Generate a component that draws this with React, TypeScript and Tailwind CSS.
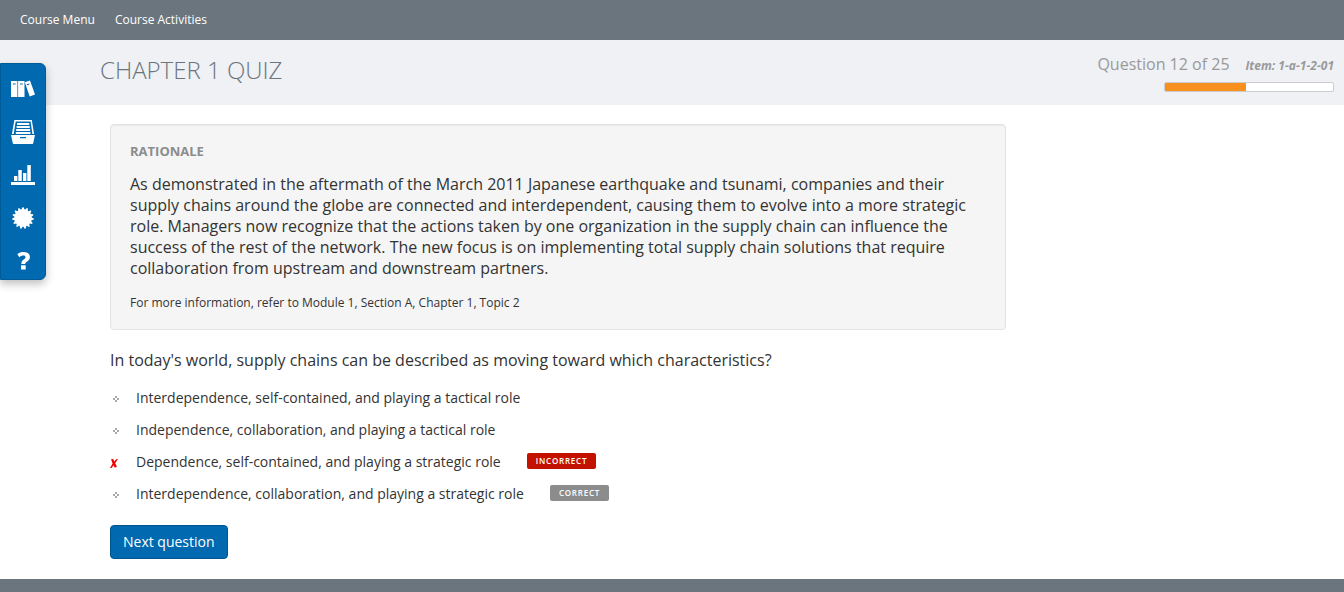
import type { ReactNode } from "react";

type Option = { text: string; mark?: "incorrect" | "correct"; chosen?: boolean };

const options: Option[] = [
  { text: "Interdependence, self-contained, and playing a tactical role" },
  { text: "Independence, collaboration, and playing a tactical role" },
  { text: "Dependence, self-contained, and playing a strategic role", mark: "incorrect", chosen: true },
  { text: "Interdependence, collaboration, and playing a strategic role", mark: "correct" },
];

// Corner points of the round seal: outer and inner radii alternate.
const sealTeeth = 15;
const sealPoints = Array.from({ length: sealTeeth * 4 }, (_, i) => {
  const radius = i % 4 < 2 ? 10.8 : 8.8;
  const angle = ((i - 0.5) / (sealTeeth * 4)) * Math.PI * 2 - Math.PI / 2;
  return `${(12 + radius * Math.cos(angle)).toFixed(2)},${(12 + radius * Math.sin(angle)).toFixed(2)}`;
}).join(" ");

function Icon({ children }: { children: ReactNode }) {
  return (
    <svg viewBox="0 0 24 24" className="size-6" fill="currentColor" aria-hidden="true">
      {children}
    </svg>
  );
}

const tools: { label: string; icon: ReactNode }[] = [
  {
    label: "Library",
    icon: (
      <Icon>
        <path fillRule="evenodd" d="M0 4h6.4v16H0zM2 6.6v1h2.6v-1z" />
        <path fillRule="evenodd" d="M7.1 4h6.4v16H7.1zM9 6.6v1h2.7v-1z" />
        <path fillRule="evenodd" d="M13.8 5.2 19 3.6l5 13.8-5.3 2.2zM15.7 7.2l.4 1 2.5-.8-.4-1z" />
      </Icon>
    ),
  },
  {
    label: "Flashcards",
    icon: (
      <Icon>
        <path d="M3.4 0h17.4l2.3 14h-1.7L19.6 1.4H4.7L2.7 14H.9z" />
        <path d="M6 3h12.3v2H6zM5.6 6h13.1v2H5.6zM5.2 9h13.9v2H5.2zM4.8 12h14.7v2H4.8z" />
        <path fillRule="evenodd" d="M0 15h24l-1.8 8.3q-.2.7-.9.7H2.700q-.7 0-.9-.7zM9 17v1.300h6V17z" />
      </Icon>
    ),
  },
  {
    label: "Reports",
    icon: (
      <Icon>
        <path d="M0 19h24v3H0zM3 13h3.4v5H3zM7.3 7h3.5v11H7.3zM12 10h3.4v8H12zM16.3 2h3.5v16h-3.5z" />
      </Icon>
    ),
  },
  {
    label: "Achievements",
    icon: (
      <Icon>
        <polygon points={sealPoints} />
      </Icon>
    ),
  },
  {
    label: "Help",
    icon: (
      <Icon>
        <path d="M6.3 5.1C8 3.6 10.1 3 12.5 3c4 0 6.4 1.900 6.400 5 0 2.300-1.100 3.600-3 4.800-1.300.8-1.600 1.100-1.600 2.200h-3.900c-.1-2.400.7-3.500 2.600-4.800 1.100-.8 1.500-1.200 1.500-2 0-1-.8-1.600-2.200-1.600-1.500 0-2.800.6-4 1.600zM10 16.200h4.700v4.300H10z" />
      </Icon>
    ),
  },
];

function Marker({ chosen }: { chosen?: boolean }) {
  return (
    <span className="flex w-[26px] shrink-0">
      {chosen ? (
        <svg viewBox="0 0 8 9" className="mt-0.5 h-[9px] w-2" role="img" aria-label="Your answer">
          <path
            d="M1 .3 3.300 0l1 2.500L6.200.2 8 0 5.200 4.300 6.900 7.800l-2.200.9-1.100-2.500L1.600 9 0 8.900l2.600-4.400z"
            fill="#f00000"
          />
        </svg>
      ) : (
        <svg viewBox="0 0 6 6" className="mt-0.5 ml-[3px] size-[6px]" aria-hidden="true">
          <path d="M2 0h2v2H2zM0 2h2v2H0zM4 2h2v2H4zM2 4h2v2H2z" fill="#aaaaaa" />
        </svg>
      )}
    </span>
  );
}

export default function App() {
  return (
    <div className="relative flex min-h-screen flex-col bg-white font-['Open_Sans',sans-serif] text-[#333333]">
      <nav className="flex h-10 items-center gap-5 bg-[#6b757d] px-5 text-xs text-white">
        <a href="#menu">Course Menu</a>
        <a href="#activities">Course Activities</a>
      </nav>

      <header className="flex h-[65px] justify-between bg-[#eff1f5] pr-[10px] pl-[100px]">
        <h1 className="pt-3 text-2xl leading-9 font-light text-[#6b757d]">CHAPTER 1 QUIZ</h1>
        <div className="flex flex-col items-end pt-3 text-[#999999]">
          <p className="flex items-baseline gap-4 text-base">
            <span>Question 12 of 25</span>
            <em className="text-xs font-bold">Item: 1-a-1-2-01</em>
          </p>
          <div className="mt-[6px] h-[10px] w-[170px] overflow-hidden rounded-xs border border-[#cccccc] bg-white">
            <div className="h-full bg-[#f7901e]" style={{ width: `${(12 / 25) * 100}%` }} />
          </div>
        </div>
      </header>

      <aside className="absolute top-[63px] left-0 flex flex-col gap-[19px] rounded-r-md border border-[#005a96] bg-[#0069b0] px-[10px] pt-[13px] pb-[6px] text-white shadow-[0_4px_8px_rgba(0,0,0,0.25)]">
        {tools.map((tool) => (
          <button key={tool.label} type="button" aria-label={tool.label}>
            {tool.icon}
          </button>
        ))}
      </aside>

      <main className="flex-1 pt-[19px] pb-5 pl-[110px]">
        <section className="mr-[338px] rounded border border-[#e3e3e3] bg-[#f5f5f5] px-[19px] pt-4 pb-4 shadow-[inset_0_1px_1px_rgba(0,0,0,0.05)]">
          <h2 className="text-[13px] leading-5 font-bold text-[#8c8c8c]">RATIONALE</h2>
          <p className="mt-[13px] text-base leading-[21px]">
            As demonstrated in the aftermath of the March 2011 Japanese earthquake and tsunami, companies and their
            supply chains around the globe are connected and interdependent, causing them to evolve into a more strategic
            role. Managers now recognize that the actions taken by one organization in the supply chain can influence the
            success of the rest of the network. The new focus is on implementing total supply chain solutions that require
            collaboration from upstream and downstream partners.
          </p>
          <p className="mt-[14px] text-xs leading-5">For more information, refer to Module 1, Section A, Chapter 1, Topic 2</p>
        </section>

        <p className="mt-5 text-base leading-[21px]">
          In today's world, supply chains can be described as moving toward which characteristics?
        </p>

        <ul className="mt-[11px] text-sm">
          {options.map((option) => (
            <li key={option.text} className="flex h-8 items-center">
              <Marker chosen={option.chosen} />
              <span>{option.text}</span>
              {option.mark === "incorrect" && (
                <strong className="mb-0.5 ml-[26px] rounded-xs bg-[#c41200] px-[9px] text-[8px] leading-4 font-semibold tracking-widest text-white">
                  INCORRECT
                </strong>
              )}
              {option.mark === "correct" && (
                <strong className="mb-0.5 ml-[26px] rounded-xs bg-[#8c8c8c] px-[9px] text-[8px] leading-4 font-semibold tracking-widest text-white">
                  CORRECT
                </strong>
              )}
            </li>
          ))}
        </ul>

        <button
          type="button"
          className="mt-[15px] h-[34px] rounded border border-[#00558f] bg-[#0069b0] px-3 text-sm font-medium text-white"
        >
          Next question
        </button>
      </main>

      <footer className="h-[13px] bg-[#6b757d]" />
    </div>
  );
}
